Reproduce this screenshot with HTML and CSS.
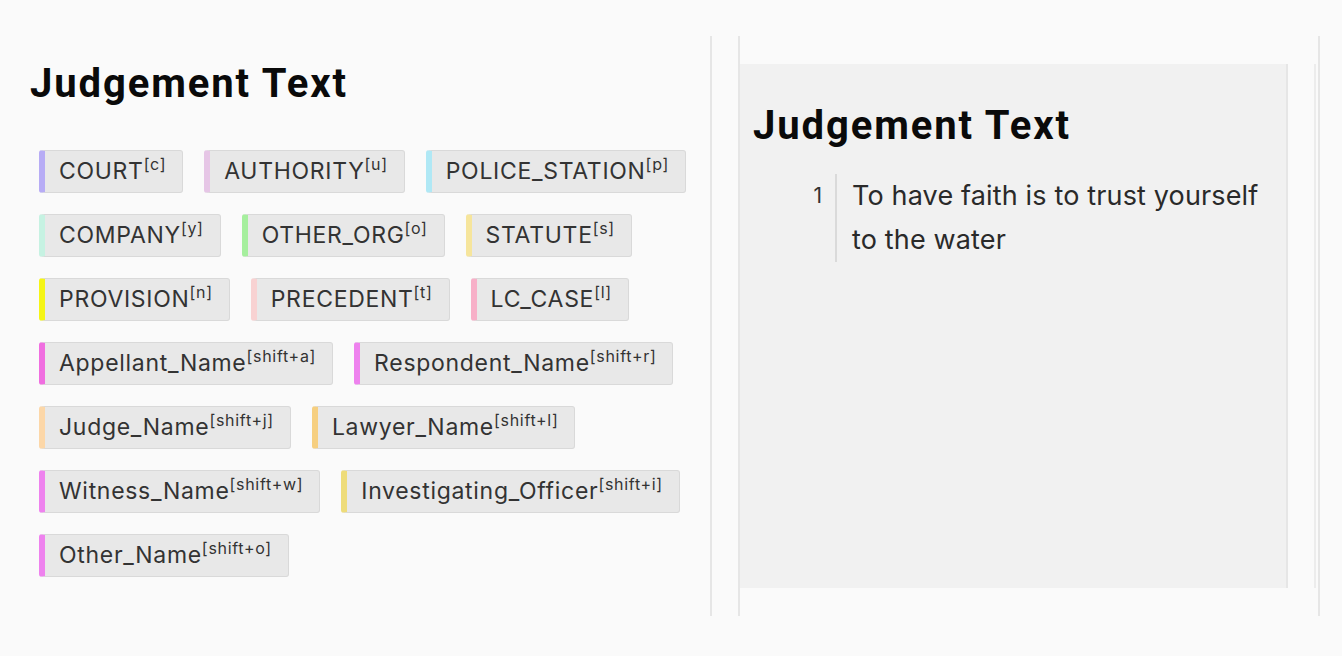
FILE: index.html
```html
<!DOCTYPE html>
<html>
<head>
<meta charset="utf-8">
<title>Judgement Text</title>
<link rel="stylesheet" href="styles.css">
</head>
<body>
<div class="app">
  <section class="left">
    <h1 class="title">Judgement Text</h1>
    <div class="tags">
      <div class="row">
        <span class="tag c-court">COURT<sup>[c]</sup></span>
        <span class="tag c-auth">AUTHORITY<sup>[u]</sup></span>
        <span class="tag c-police">POLICE_STATION<sup>[p]</sup></span>
      </div>
      <div class="row">
        <span class="tag c-company">COMPANY<sup>[y]</sup></span>
        <span class="tag c-org">OTHER_ORG<sup>[o]</sup></span>
        <span class="tag c-statute">STATUTE<sup>[s]</sup></span>
      </div>
      <div class="row">
        <span class="tag c-prov">PROVISION<sup>[n]</sup></span>
        <span class="tag c-prec">PRECEDENT<sup>[t]</sup></span>
        <span class="tag c-lc">LC_CASE<sup>[l]</sup></span>
      </div>
      <div class="row">
        <span class="tag c-app">Appellant_Name<sup>[shift+a]</sup></span>
        <span class="tag c-resp">Respondent_Name<sup>[shift+r]</sup></span>
      </div>
      <div class="row">
        <span class="tag c-judge">Judge_Name<sup>[shift+j]</sup></span>
        <span class="tag c-lawyer">Lawyer_Name<sup>[shift+l]</sup></span>
      </div>
      <div class="row">
        <span class="tag c-wit">Witness_Name<sup>[shift+w]</sup></span>
        <span class="tag c-inv">Investigating_Officer<sup>[shift+i]</sup></span>
      </div>
      <div class="row">
        <span class="tag c-other">Other_Name<sup>[shift+o]</sup></span>
      </div>
    </div>
  </section>
  <section class="right">
    <div class="doc">
      <h1 class="title doc-title">Judgement Text</h1>
      <div class="line">
        <div class="num">1</div>
        <div class="text">To have faith is to trust yourself to the water</div>
      </div>
    </div>
    <div class="rail"></div>
  </section>
</div>
</body>
</html>
```

FILE: styles.css
```css
html, body {
  margin: 0;
  padding: 0;
  background: #fafafa;
}

body {
  font-family: Inter, "Noto Sans", sans-serif;
  color: #2b2b2b;
}

.app {
  display: flex;
  padding-top: 36px;
  height: 580px;
}

.left {
  width: 710px;
  border-right: 2px solid #e6e6e6;
  flex: none;
}

.title {
  font-family: Roboto, "Liberation Sans", sans-serif;
  font-weight: 700;
  font-size: 40px;
  line-height: 48px;
  letter-spacing: 1.9px;
  color: #0a0a0a;
  margin: 0;
}

.left .title {
  margin: 24px 0 0 30px;
}

.tags {
  margin: 42px 0 0 39px;
  display: flex;
  flex-direction: column;
  gap: 21px;
}

.row {
  display: flex;
  gap: 21px;
}

.tag {
  box-sizing: border-box;
  height: 43px;
  display: inline-block;
  line-height: 41px;
  font-size: 23px;
  letter-spacing: 0.7px;
  color: #333;
  background: #e8e8e8;
  border: 1px solid #d9d9d9;
  border-left: 6px solid #ccc;
  border-radius: 3px;
  padding: 0 16px 0 14px;
  white-space: nowrap;
}

.tag sup {
  font-size: 16px;
  letter-spacing: 0.7px;
  line-height: 0;
  vertical-align: super;
}

.c-court { border-left-color: #b7acf5; }
.c-auth { border-left-color: #e6c6e6; }
.c-police { border-left-color: #b0e8f5; }
.c-company { border-left-color: #c6f2e2; }
.c-org { border-left-color: #a6ef9e; }
.c-statute { border-left-color: #f6e59c; }
.c-prov { border-left-color: #f5f516; }
.c-prec { border-left-color: #f8d2d2; }
.c-lc { border-left-color: #f7b0c8; }
.c-app { border-left-color: #f06ee0; }
.c-resp { border-left-color: #ee82ee; }
.c-judge { border-left-color: #fcd7a8; }
.c-lawyer { border-left-color: #f6cf80; }
.c-wit { border-left-color: #ee82ee; }
.c-inv { border-left-color: #eedc7a; }
.c-other { border-left-color: #ee82ee; }

.right {
  margin-left: 26px;
  width: 578px;
  flex: none;
  border-left: 2px solid #e6e6e6;
  border-right: 2px solid #e6e6e6;
  box-sizing: content-box;
  padding: 28px 0;
  height: 524px;
  display: flex;
}

.doc {
  width: 546px;
  flex: none;
  background: #f1f1f1;
  border-right: 2px solid #e6e6e6;
  height: 524px;
}

.doc-title {
  margin: 38px 0 0 13px;
}

.line {
  display: flex;
  margin-top: 24px;
}

.num {
  width: 97px;
  flex: none;
  box-sizing: border-box;
  text-align: right;
  padding-right: 13px;
  font-size: 21px;
  line-height: 44px;
  color: #333;
  border-right: 2px solid #dadada;
}

.text {
  width: 418px;
  padding-left: 15px;
  font-size: 27px;
  letter-spacing: 0.15px;
  line-height: 44px;
  color: #2a2a2a;
}

.rail {
  margin-left: 26px;
  width: 2px;
  background: #ececec;
  height: 524px;
}
```
